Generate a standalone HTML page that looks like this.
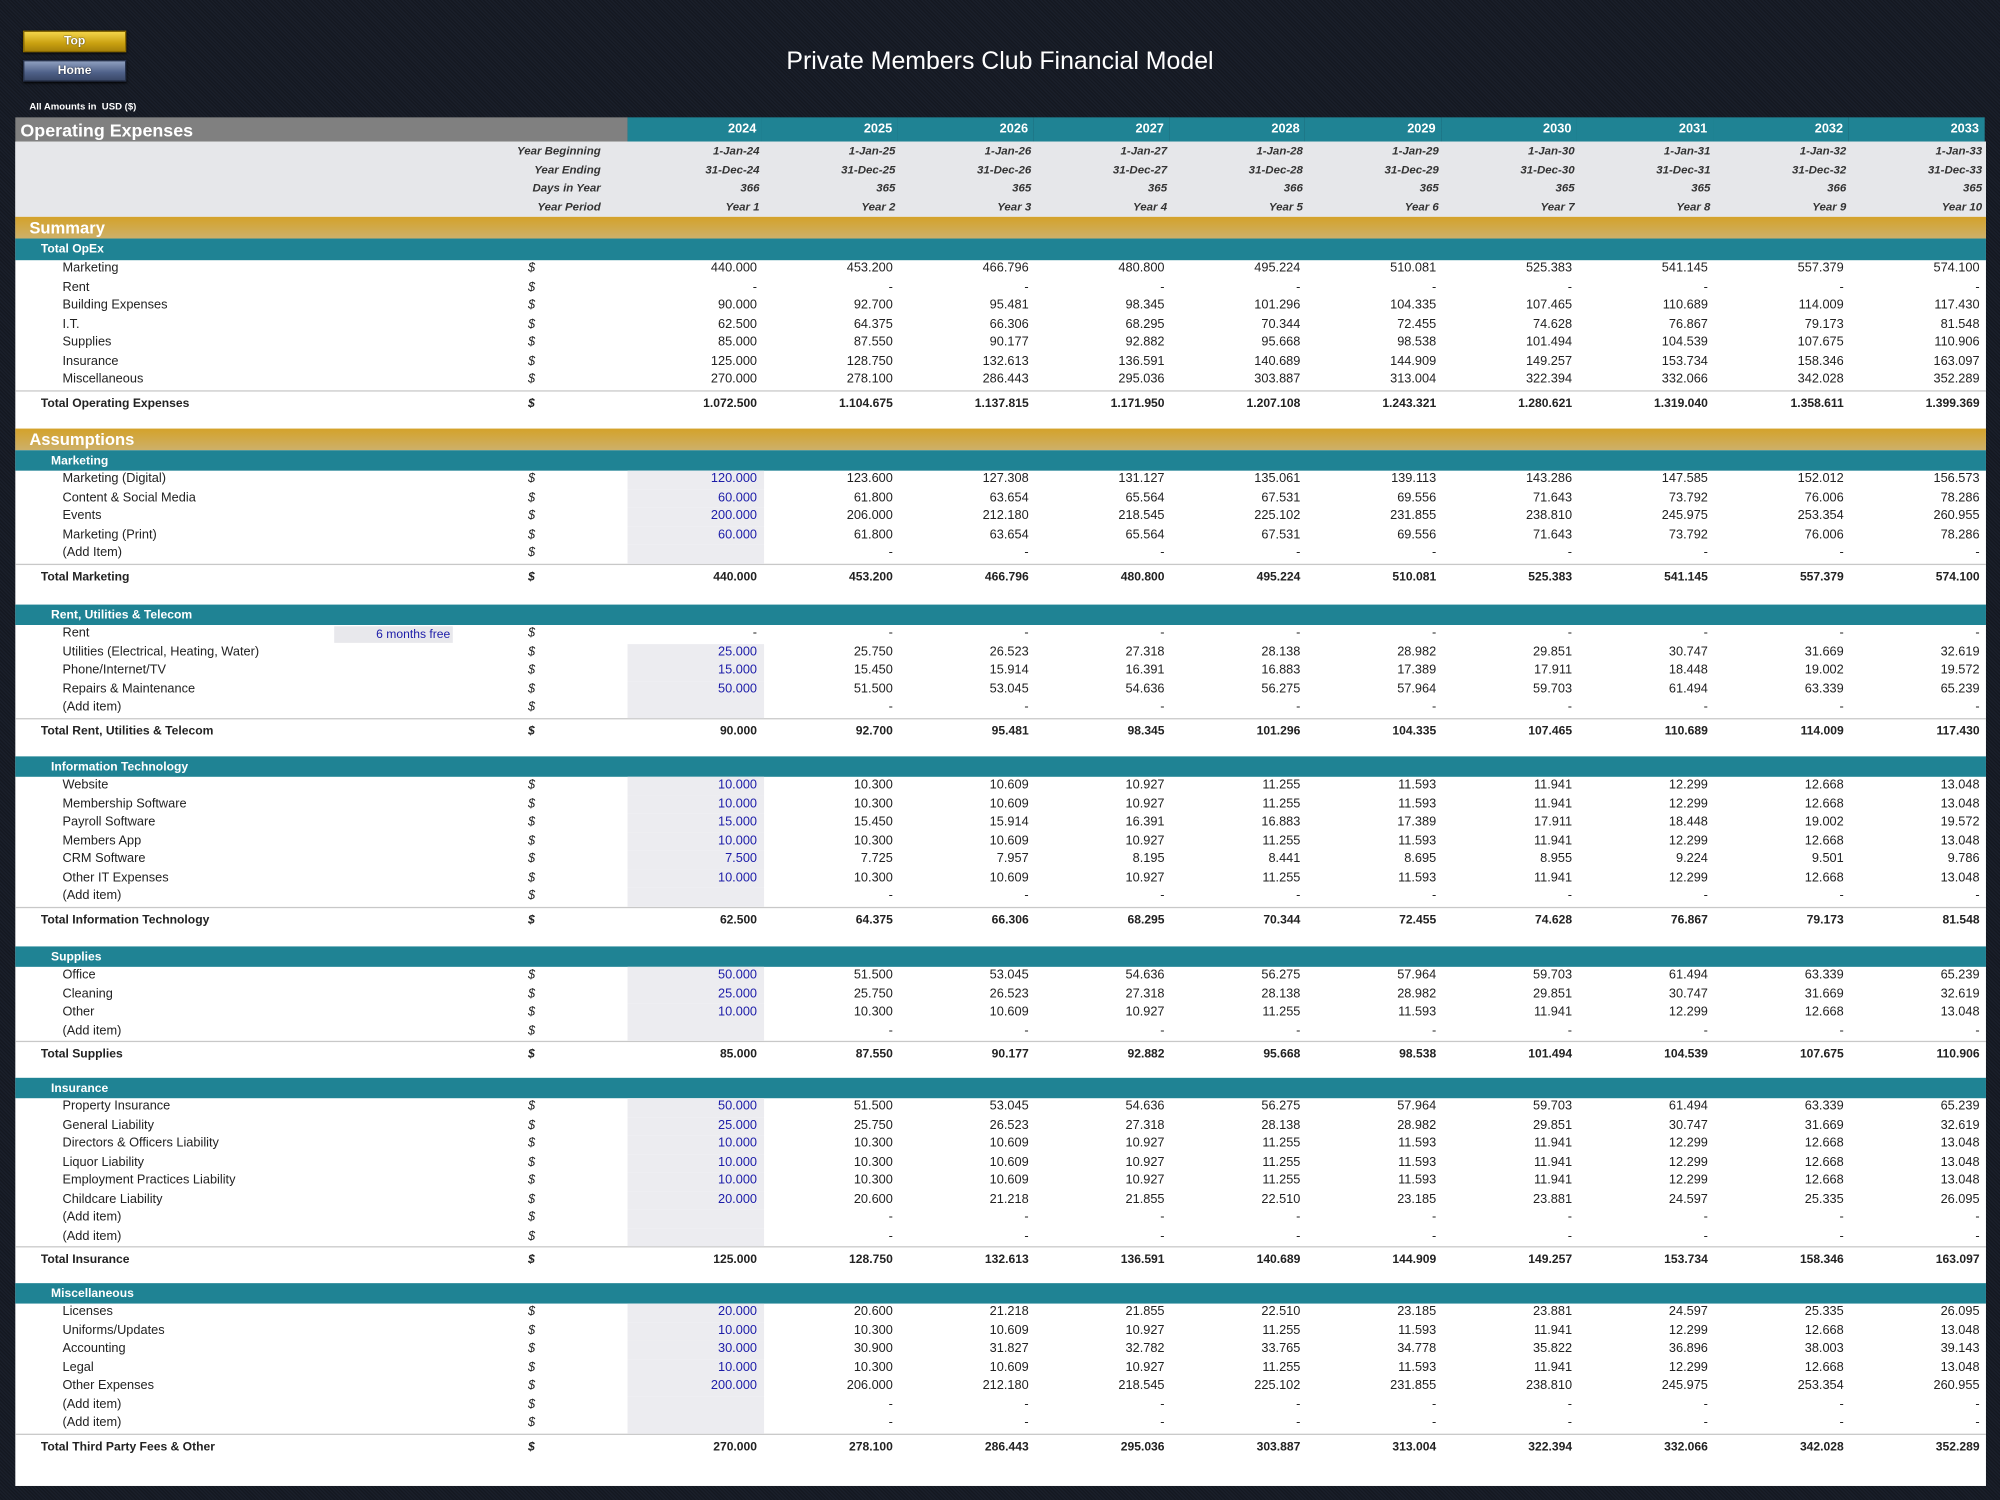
<!DOCTYPE html>
<html><head><meta charset="utf-8"><style>
body{margin:0;width:2000px;height:1500px;overflow:hidden;background:#161b25}
#w{position:absolute;left:0;top:0;width:1568px;height:1176px;transform:scale(1.27551);transform-origin:0 0;font-family:"Liberation Sans",Arial,sans-serif;color:#222;
background:repeating-linear-gradient(45deg,#1a1f2a 0,#1a1f2a 1px,#141821 1px,#141821 2px)}
.btn{position:absolute;left:18px;width:79px;height:15px;font-size:9.5px;font-weight:bold;color:#fff;text-align:center;line-height:15px;box-shadow:0 1px 2px #000;text-shadow:0 0 1px #000}
.title{position:absolute;left:0;width:1568px;top:37px;text-align:center;color:#fff;font-size:19.5px}
.amt{position:absolute;left:23px;top:79px;font-size:7.5px;font-weight:bold;color:#fff}
.sheet{position:absolute;left:12px;top:111px;width:1545px;height:1054px;background:#fff}
.hdr{position:absolute;left:12px;top:92px;width:1545px;height:19px;display:flex;font-weight:bold;color:#fff}
.hdr .a{width:468px;background:#808080;font-size:14px;line-height:20px;padding-left:4px}
.hdr .a{width:480px;box-sizing:border-box}
.hdr .y{width:106.5px;background:#1f8394;font-size:10px;line-height:20px;text-align:right;padding-right:4px;box-sizing:border-box}
.info{position:absolute;left:12px;top:111px;width:1545px;height:59px;background:#e6e7ea}
.ir{display:flex;height:14.6px;line-height:14.6px;font-size:9px;font-style:italic;font-weight:bold;color:#333}
.ir .l{width:480px;box-sizing:border-box;text-align:right;padding-right:21px}
.ir .v{width:106.5px;text-align:right;padding-right:3px;box-sizing:border-box}
.gold{position:absolute;left:12px;width:1545px;height:17px;background:linear-gradient(#d4a22a,#cdb06a);color:#fff;font-weight:bold;font-size:13px;line-height:18px;padding-left:11px;box-sizing:border-box}
.sec{position:absolute;left:12px;width:1545px}
.t{height:16px;background:#1f8394;color:#fff;font-weight:bold;font-size:9.5px;line-height:17px;padding-left:28px}
.r{display:flex;height:14.5px;line-height:14.5px;font-size:10px}
.r span{display:block;box-sizing:border-box}
.r .l{width:402px;padding-left:37px;position:relative;white-space:nowrap}
.r .d{width:78px;font-style:italic}
.r .v{width:106.5px;text-align:right;padding-right:5px}
.r .i{background:#ececf0;color:#1c1ca8}
.tot{border-top:1px solid #c8c8c8;height:18px;line-height:19px;font-weight:bold;font-size:9.5px}
.r.tot .l{padding-left:20px}
.fm{position:absolute;left:250px;top:1px;width:93px;height:12.5px;line-height:13px;background:#e8e8ec;color:#1c1ca8;text-align:right;padding-right:2px;font-size:9.5px}
</style></head><body><div id="w">
<div class="btn" style="top:24px;background:linear-gradient(#f3d54a,#c9a010 60%,#a7820a);border:1px solid #8a6a00">Top</div>
<div class="btn" style="top:47px;background:linear-gradient(#8fa0c0,#4e6088 60%,#3a4868);border:1px solid #27324a">Home</div>
<div class="title">Private Members Club Financial Model</div>
<div class="amt">All Amounts in&nbsp; USD ($)</div>
<div class="sheet"></div>
<div class="hdr"><div class="a">Operating Expenses</div><div class="y" style="width:105px">2024</div><div class="y">2025</div><div class="y">2026</div><div class="y">2027</div><div class="y">2028</div><div class="y">2029</div><div class="y">2030</div><div class="y">2031</div><div class="y">2032</div><div class="y">2033</div></div>
<div class="info">
<div class="ir"><span class="l">Year Beginning</span><span class="v">1-Jan-24</span><span class="v">1-Jan-25</span><span class="v">1-Jan-26</span><span class="v">1-Jan-27</span><span class="v">1-Jan-28</span><span class="v">1-Jan-29</span><span class="v">1-Jan-30</span><span class="v">1-Jan-31</span><span class="v">1-Jan-32</span><span class="v">1-Jan-33</span></div>
<div class="ir"><span class="l">Year Ending</span><span class="v">31-Dec-24</span><span class="v">31-Dec-25</span><span class="v">31-Dec-26</span><span class="v">31-Dec-27</span><span class="v">31-Dec-28</span><span class="v">31-Dec-29</span><span class="v">31-Dec-30</span><span class="v">31-Dec-31</span><span class="v">31-Dec-32</span><span class="v">31-Dec-33</span></div>
<div class="ir"><span class="l">Days in Year</span><span class="v">366</span><span class="v">365</span><span class="v">365</span><span class="v">365</span><span class="v">366</span><span class="v">365</span><span class="v">365</span><span class="v">365</span><span class="v">366</span><span class="v">365</span></div>
<div class="ir"><span class="l">Year Period</span><span class="v">Year 1</span><span class="v">Year 2</span><span class="v">Year 3</span><span class="v">Year 4</span><span class="v">Year 5</span><span class="v">Year 6</span><span class="v">Year 7</span><span class="v">Year 8</span><span class="v">Year 9</span><span class="v">Year 10</span></div>
</div>
<div class="gold" style="top:170px">Summary</div>
<div class="sec" style="top:187px"><div class="t" style="height:17px;padding-left:20px">Total OpEx</div>
<div class="r"><span class="l">Marketing</span><span class="d">$</span><span class="v">440.000</span><span class="v">453.200</span><span class="v">466.796</span><span class="v">480.800</span><span class="v">495.224</span><span class="v">510.081</span><span class="v">525.383</span><span class="v">541.145</span><span class="v">557.379</span><span class="v">574.100</span></div>
<div class="r"><span class="l">Rent</span><span class="d">$</span><span class="v">-</span><span class="v">-</span><span class="v">-</span><span class="v">-</span><span class="v">-</span><span class="v">-</span><span class="v">-</span><span class="v">-</span><span class="v">-</span><span class="v">-</span></div>
<div class="r"><span class="l">Building Expenses</span><span class="d">$</span><span class="v">90.000</span><span class="v">92.700</span><span class="v">95.481</span><span class="v">98.345</span><span class="v">101.296</span><span class="v">104.335</span><span class="v">107.465</span><span class="v">110.689</span><span class="v">114.009</span><span class="v">117.430</span></div>
<div class="r"><span class="l">I.T.</span><span class="d">$</span><span class="v">62.500</span><span class="v">64.375</span><span class="v">66.306</span><span class="v">68.295</span><span class="v">70.344</span><span class="v">72.455</span><span class="v">74.628</span><span class="v">76.867</span><span class="v">79.173</span><span class="v">81.548</span></div>
<div class="r"><span class="l">Supplies</span><span class="d">$</span><span class="v">85.000</span><span class="v">87.550</span><span class="v">90.177</span><span class="v">92.882</span><span class="v">95.668</span><span class="v">98.538</span><span class="v">101.494</span><span class="v">104.539</span><span class="v">107.675</span><span class="v">110.906</span></div>
<div class="r"><span class="l">Insurance</span><span class="d">$</span><span class="v">125.000</span><span class="v">128.750</span><span class="v">132.613</span><span class="v">136.591</span><span class="v">140.689</span><span class="v">144.909</span><span class="v">149.257</span><span class="v">153.734</span><span class="v">158.346</span><span class="v">163.097</span></div>
<div class="r"><span class="l">Miscellaneous</span><span class="d">$</span><span class="v">270.000</span><span class="v">278.100</span><span class="v">286.443</span><span class="v">295.036</span><span class="v">303.887</span><span class="v">313.004</span><span class="v">322.394</span><span class="v">332.066</span><span class="v">342.028</span><span class="v">352.289</span></div>
<div class="r tot"><span class="l">Total Operating Expenses</span><span class="d">$</span><span class="v">1.072.500</span><span class="v">1.104.675</span><span class="v">1.137.815</span><span class="v">1.171.950</span><span class="v">1.207.108</span><span class="v">1.243.321</span><span class="v">1.280.621</span><span class="v">1.319.040</span><span class="v">1.358.611</span><span class="v">1.399.369</span></div>
</div>
<div class="gold" style="top:336px">Assumptions</div>
<div class="sec" style="top:353px"><div class="t">Marketing</div>
<div class="r"><span class="l">Marketing (Digital)</span><span class="d">$</span><span class="v i">120.000</span><span class="v">123.600</span><span class="v">127.308</span><span class="v">131.127</span><span class="v">135.061</span><span class="v">139.113</span><span class="v">143.286</span><span class="v">147.585</span><span class="v">152.012</span><span class="v">156.573</span></div>
<div class="r"><span class="l">Content &amp; Social Media</span><span class="d">$</span><span class="v i">60.000</span><span class="v">61.800</span><span class="v">63.654</span><span class="v">65.564</span><span class="v">67.531</span><span class="v">69.556</span><span class="v">71.643</span><span class="v">73.792</span><span class="v">76.006</span><span class="v">78.286</span></div>
<div class="r"><span class="l">Events</span><span class="d">$</span><span class="v i">200.000</span><span class="v">206.000</span><span class="v">212.180</span><span class="v">218.545</span><span class="v">225.102</span><span class="v">231.855</span><span class="v">238.810</span><span class="v">245.975</span><span class="v">253.354</span><span class="v">260.955</span></div>
<div class="r"><span class="l">Marketing (Print)</span><span class="d">$</span><span class="v i">60.000</span><span class="v">61.800</span><span class="v">63.654</span><span class="v">65.564</span><span class="v">67.531</span><span class="v">69.556</span><span class="v">71.643</span><span class="v">73.792</span><span class="v">76.006</span><span class="v">78.286</span></div>
<div class="r"><span class="l">(Add Item)</span><span class="d">$</span><span class="v i"></span><span class="v">-</span><span class="v">-</span><span class="v">-</span><span class="v">-</span><span class="v">-</span><span class="v">-</span><span class="v">-</span><span class="v">-</span><span class="v">-</span></div>
<div class="r tot"><span class="l">Total Marketing</span><span class="d">$</span><span class="v">440.000</span><span class="v">453.200</span><span class="v">466.796</span><span class="v">480.800</span><span class="v">495.224</span><span class="v">510.081</span><span class="v">525.383</span><span class="v">541.145</span><span class="v">557.379</span><span class="v">574.100</span></div>
</div>
<div class="sec" style="top:474px"><div class="t">Rent, Utilities &amp; Telecom</div>
<div class="r"><span class="l">Rent<span class="fm">6 months free</span></span><span class="d">$</span><span class="v">-</span><span class="v">-</span><span class="v">-</span><span class="v">-</span><span class="v">-</span><span class="v">-</span><span class="v">-</span><span class="v">-</span><span class="v">-</span><span class="v">-</span></div>
<div class="r"><span class="l">Utilities (Electrical, Heating, Water)</span><span class="d">$</span><span class="v i">25.000</span><span class="v">25.750</span><span class="v">26.523</span><span class="v">27.318</span><span class="v">28.138</span><span class="v">28.982</span><span class="v">29.851</span><span class="v">30.747</span><span class="v">31.669</span><span class="v">32.619</span></div>
<div class="r"><span class="l">Phone/Internet/TV</span><span class="d">$</span><span class="v i">15.000</span><span class="v">15.450</span><span class="v">15.914</span><span class="v">16.391</span><span class="v">16.883</span><span class="v">17.389</span><span class="v">17.911</span><span class="v">18.448</span><span class="v">19.002</span><span class="v">19.572</span></div>
<div class="r"><span class="l">Repairs &amp; Maintenance</span><span class="d">$</span><span class="v i">50.000</span><span class="v">51.500</span><span class="v">53.045</span><span class="v">54.636</span><span class="v">56.275</span><span class="v">57.964</span><span class="v">59.703</span><span class="v">61.494</span><span class="v">63.339</span><span class="v">65.239</span></div>
<div class="r"><span class="l">(Add item)</span><span class="d">$</span><span class="v i"></span><span class="v">-</span><span class="v">-</span><span class="v">-</span><span class="v">-</span><span class="v">-</span><span class="v">-</span><span class="v">-</span><span class="v">-</span><span class="v">-</span></div>
<div class="r tot"><span class="l">Total Rent, Utilities &amp; Telecom</span><span class="d">$</span><span class="v">90.000</span><span class="v">92.700</span><span class="v">95.481</span><span class="v">98.345</span><span class="v">101.296</span><span class="v">104.335</span><span class="v">107.465</span><span class="v">110.689</span><span class="v">114.009</span><span class="v">117.430</span></div>
</div>
<div class="sec" style="top:593px"><div class="t">Information Technology</div>
<div class="r"><span class="l">Website</span><span class="d">$</span><span class="v i">10.000</span><span class="v">10.300</span><span class="v">10.609</span><span class="v">10.927</span><span class="v">11.255</span><span class="v">11.593</span><span class="v">11.941</span><span class="v">12.299</span><span class="v">12.668</span><span class="v">13.048</span></div>
<div class="r"><span class="l">Membership Software</span><span class="d">$</span><span class="v i">10.000</span><span class="v">10.300</span><span class="v">10.609</span><span class="v">10.927</span><span class="v">11.255</span><span class="v">11.593</span><span class="v">11.941</span><span class="v">12.299</span><span class="v">12.668</span><span class="v">13.048</span></div>
<div class="r"><span class="l">Payroll Software</span><span class="d">$</span><span class="v i">15.000</span><span class="v">15.450</span><span class="v">15.914</span><span class="v">16.391</span><span class="v">16.883</span><span class="v">17.389</span><span class="v">17.911</span><span class="v">18.448</span><span class="v">19.002</span><span class="v">19.572</span></div>
<div class="r"><span class="l">Members App</span><span class="d">$</span><span class="v i">10.000</span><span class="v">10.300</span><span class="v">10.609</span><span class="v">10.927</span><span class="v">11.255</span><span class="v">11.593</span><span class="v">11.941</span><span class="v">12.299</span><span class="v">12.668</span><span class="v">13.048</span></div>
<div class="r"><span class="l">CRM Software</span><span class="d">$</span><span class="v i">7.500</span><span class="v">7.725</span><span class="v">7.957</span><span class="v">8.195</span><span class="v">8.441</span><span class="v">8.695</span><span class="v">8.955</span><span class="v">9.224</span><span class="v">9.501</span><span class="v">9.786</span></div>
<div class="r"><span class="l">Other IT Expenses</span><span class="d">$</span><span class="v i">10.000</span><span class="v">10.300</span><span class="v">10.609</span><span class="v">10.927</span><span class="v">11.255</span><span class="v">11.593</span><span class="v">11.941</span><span class="v">12.299</span><span class="v">12.668</span><span class="v">13.048</span></div>
<div class="r"><span class="l">(Add item)</span><span class="d">$</span><span class="v i"></span><span class="v">-</span><span class="v">-</span><span class="v">-</span><span class="v">-</span><span class="v">-</span><span class="v">-</span><span class="v">-</span><span class="v">-</span><span class="v">-</span></div>
<div class="r tot"><span class="l">Total Information Technology</span><span class="d">$</span><span class="v">62.500</span><span class="v">64.375</span><span class="v">66.306</span><span class="v">68.295</span><span class="v">70.344</span><span class="v">72.455</span><span class="v">74.628</span><span class="v">76.867</span><span class="v">79.173</span><span class="v">81.548</span></div>
</div>
<div class="sec" style="top:742px"><div class="t">Supplies</div>
<div class="r"><span class="l">Office</span><span class="d">$</span><span class="v i">50.000</span><span class="v">51.500</span><span class="v">53.045</span><span class="v">54.636</span><span class="v">56.275</span><span class="v">57.964</span><span class="v">59.703</span><span class="v">61.494</span><span class="v">63.339</span><span class="v">65.239</span></div>
<div class="r"><span class="l">Cleaning</span><span class="d">$</span><span class="v i">25.000</span><span class="v">25.750</span><span class="v">26.523</span><span class="v">27.318</span><span class="v">28.138</span><span class="v">28.982</span><span class="v">29.851</span><span class="v">30.747</span><span class="v">31.669</span><span class="v">32.619</span></div>
<div class="r"><span class="l">Other</span><span class="d">$</span><span class="v i">10.000</span><span class="v">10.300</span><span class="v">10.609</span><span class="v">10.927</span><span class="v">11.255</span><span class="v">11.593</span><span class="v">11.941</span><span class="v">12.299</span><span class="v">12.668</span><span class="v">13.048</span></div>
<div class="r"><span class="l">(Add item)</span><span class="d">$</span><span class="v i"></span><span class="v">-</span><span class="v">-</span><span class="v">-</span><span class="v">-</span><span class="v">-</span><span class="v">-</span><span class="v">-</span><span class="v">-</span><span class="v">-</span></div>
<div class="r tot"><span class="l">Total Supplies</span><span class="d">$</span><span class="v">85.000</span><span class="v">87.550</span><span class="v">90.177</span><span class="v">92.882</span><span class="v">95.668</span><span class="v">98.538</span><span class="v">101.494</span><span class="v">104.539</span><span class="v">107.675</span><span class="v">110.906</span></div>
</div>
<div class="sec" style="top:845px"><div class="t">Insurance</div>
<div class="r"><span class="l">Property Insurance</span><span class="d">$</span><span class="v i">50.000</span><span class="v">51.500</span><span class="v">53.045</span><span class="v">54.636</span><span class="v">56.275</span><span class="v">57.964</span><span class="v">59.703</span><span class="v">61.494</span><span class="v">63.339</span><span class="v">65.239</span></div>
<div class="r"><span class="l">General Liability</span><span class="d">$</span><span class="v i">25.000</span><span class="v">25.750</span><span class="v">26.523</span><span class="v">27.318</span><span class="v">28.138</span><span class="v">28.982</span><span class="v">29.851</span><span class="v">30.747</span><span class="v">31.669</span><span class="v">32.619</span></div>
<div class="r"><span class="l">Directors &amp; Officers Liability</span><span class="d">$</span><span class="v i">10.000</span><span class="v">10.300</span><span class="v">10.609</span><span class="v">10.927</span><span class="v">11.255</span><span class="v">11.593</span><span class="v">11.941</span><span class="v">12.299</span><span class="v">12.668</span><span class="v">13.048</span></div>
<div class="r"><span class="l">Liquor Liability</span><span class="d">$</span><span class="v i">10.000</span><span class="v">10.300</span><span class="v">10.609</span><span class="v">10.927</span><span class="v">11.255</span><span class="v">11.593</span><span class="v">11.941</span><span class="v">12.299</span><span class="v">12.668</span><span class="v">13.048</span></div>
<div class="r"><span class="l">Employment Practices Liability</span><span class="d">$</span><span class="v i">10.000</span><span class="v">10.300</span><span class="v">10.609</span><span class="v">10.927</span><span class="v">11.255</span><span class="v">11.593</span><span class="v">11.941</span><span class="v">12.299</span><span class="v">12.668</span><span class="v">13.048</span></div>
<div class="r"><span class="l">Childcare Liability</span><span class="d">$</span><span class="v i">20.000</span><span class="v">20.600</span><span class="v">21.218</span><span class="v">21.855</span><span class="v">22.510</span><span class="v">23.185</span><span class="v">23.881</span><span class="v">24.597</span><span class="v">25.335</span><span class="v">26.095</span></div>
<div class="r"><span class="l">(Add item)</span><span class="d">$</span><span class="v i"></span><span class="v">-</span><span class="v">-</span><span class="v">-</span><span class="v">-</span><span class="v">-</span><span class="v">-</span><span class="v">-</span><span class="v">-</span><span class="v">-</span></div>
<div class="r"><span class="l">(Add item)</span><span class="d">$</span><span class="v i"></span><span class="v">-</span><span class="v">-</span><span class="v">-</span><span class="v">-</span><span class="v">-</span><span class="v">-</span><span class="v">-</span><span class="v">-</span><span class="v">-</span></div>
<div class="r tot"><span class="l">Total Insurance</span><span class="d">$</span><span class="v">125.000</span><span class="v">128.750</span><span class="v">132.613</span><span class="v">136.591</span><span class="v">140.689</span><span class="v">144.909</span><span class="v">149.257</span><span class="v">153.734</span><span class="v">158.346</span><span class="v">163.097</span></div>
</div>
<div class="sec" style="top:1006px"><div class="t">Miscellaneous</div>
<div class="r"><span class="l">Licenses</span><span class="d">$</span><span class="v i">20.000</span><span class="v">20.600</span><span class="v">21.218</span><span class="v">21.855</span><span class="v">22.510</span><span class="v">23.185</span><span class="v">23.881</span><span class="v">24.597</span><span class="v">25.335</span><span class="v">26.095</span></div>
<div class="r"><span class="l">Uniforms/Updates</span><span class="d">$</span><span class="v i">10.000</span><span class="v">10.300</span><span class="v">10.609</span><span class="v">10.927</span><span class="v">11.255</span><span class="v">11.593</span><span class="v">11.941</span><span class="v">12.299</span><span class="v">12.668</span><span class="v">13.048</span></div>
<div class="r"><span class="l">Accounting</span><span class="d">$</span><span class="v i">30.000</span><span class="v">30.900</span><span class="v">31.827</span><span class="v">32.782</span><span class="v">33.765</span><span class="v">34.778</span><span class="v">35.822</span><span class="v">36.896</span><span class="v">38.003</span><span class="v">39.143</span></div>
<div class="r"><span class="l">Legal</span><span class="d">$</span><span class="v i">10.000</span><span class="v">10.300</span><span class="v">10.609</span><span class="v">10.927</span><span class="v">11.255</span><span class="v">11.593</span><span class="v">11.941</span><span class="v">12.299</span><span class="v">12.668</span><span class="v">13.048</span></div>
<div class="r"><span class="l">Other Expenses</span><span class="d">$</span><span class="v i">200.000</span><span class="v">206.000</span><span class="v">212.180</span><span class="v">218.545</span><span class="v">225.102</span><span class="v">231.855</span><span class="v">238.810</span><span class="v">245.975</span><span class="v">253.354</span><span class="v">260.955</span></div>
<div class="r"><span class="l">(Add item)</span><span class="d">$</span><span class="v i"></span><span class="v">-</span><span class="v">-</span><span class="v">-</span><span class="v">-</span><span class="v">-</span><span class="v">-</span><span class="v">-</span><span class="v">-</span><span class="v">-</span></div>
<div class="r"><span class="l">(Add item)</span><span class="d">$</span><span class="v i"></span><span class="v">-</span><span class="v">-</span><span class="v">-</span><span class="v">-</span><span class="v">-</span><span class="v">-</span><span class="v">-</span><span class="v">-</span><span class="v">-</span></div>
<div class="r tot"><span class="l">Total Third Party Fees &amp; Other</span><span class="d">$</span><span class="v">270.000</span><span class="v">278.100</span><span class="v">286.443</span><span class="v">295.036</span><span class="v">303.887</span><span class="v">313.004</span><span class="v">322.394</span><span class="v">332.066</span><span class="v">342.028</span><span class="v">352.289</span></div>
</div>
</div></body></html>
